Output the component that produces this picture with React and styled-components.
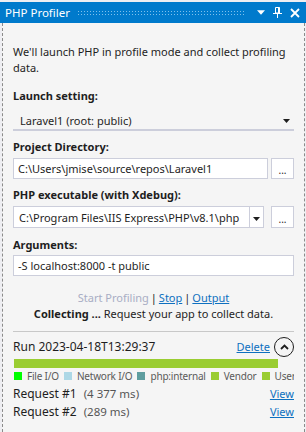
import React from "react";
import styled, { createGlobalStyle } from "styled-components";

const Global = createGlobalStyle`
  html, body { margin: 0; padding: 0; background: #f5f5f5; }
  body { font-family: "Noto Sans", "Open Sans", sans-serif; font-size: 11px; color: #1e1e1e; }
  * { box-sizing: border-box; }
`;

const Window = styled.div`
  width: 306px;
  height: 432px;
  padding-top: 2px;
  background: #eeeef2;
  display: flex;
  flex-direction: column;
  overflow: hidden;
`;

const TitleBar = styled.div`
  height: 21px;
  flex-shrink: 0;
  background: #007acc;
  display: flex;
  align-items: center;
  padding: 0 6px 0 5px;
  gap: 7px;
  color: #fff;
`;

const Title = styled.span`
  font-size: 11.5px;
  white-space: nowrap;
`;

const Grip = styled.div`
  flex: 1;
  height: 5px;
  margin-right: 6px;
  background-image: radial-gradient(circle, rgba(140, 200, 240, 0.9) 0.55px, transparent 0.8px);
  background-size: 3px 3px;
`;

const TitleIcons = styled.div`
  display: flex;
  align-items: center;
  gap: 8px;
`;

const Panel = styled.div`
  flex: 1;
  margin: 0 1px 0 2px;
  background: #f5f5f5;
  border-left: 1px dashed #8a8a8a;
  border-right: 1px dashed #8a8a8a;
  padding: 21px 10px 0 10px;
  display: flex;
  flex-direction: column;
`;

const Intro = styled.p`
  margin: 0 0 12px;
  line-height: 16px;
`;

const Label = styled.div`
  font-weight: 700;
  line-height: 16px;
  margin-bottom: ${(p) => p.$mb ?? 3}px;
`;

const FlatCombo = styled.div`
  display: flex;
  align-items: center;
  justify-content: space-between;
  height: 27px;
  padding: 8px 4px 0 7px;
  border-bottom: 2px solid #cccedb;
  margin-bottom: 8px;
`;

const Row = styled.div`
  display: flex;
  gap: ${(p) => p.$gap || 3}px;
  margin-bottom: ${(p) => p.$mb ?? 8}px;
`;

const TextBox = styled.div`
  flex: 1;
  height: ${(p) => p.$h || 21}px;
  background: #fff;
  border: 1px solid #cccedb;
  display: flex;
  align-items: center;
  padding-left: 4px;
  white-space: nowrap;
  overflow: hidden;
`;

const ComboBox = styled.div`
  flex: 1;
  height: 22px;
  background: #fff;
  border: 1px solid #cccedb;
  display: flex;
  align-items: stretch;
`;

const ComboText = styled.div`
  flex: 1;
  display: flex;
  align-items: center;
  padding-left: 5px;
  white-space: nowrap;
  overflow: hidden;
`;

const ComboArrow = styled.div`
  width: 14px;
  border-left: 1px solid #cccedb;
  display: flex;
  align-items: flex-end;
  justify-content: center;
  padding-bottom: 6px;
`;

const DotsButton = styled.div`
  width: 23px;
  height: ${(p) => p.$h || 21}px;
  background: #fff;
  border: 1px solid #cccedb;
  display: flex;
  align-items: center;
  justify-content: center;
  font-size: 10px;
  line-height: 1;
  padding-top: 3px;
`;

const Actions = styled.div`
  text-align: center;
  line-height: 16px;
  margin-top: 14px;
`;

const Link = styled.span`
  color: ${(p) => (p.$disabled ? "#a8adc4" : "#0e70c0")};
  text-decoration: ${(p) => (p.$disabled ? "none" : "underline")};
`;

const Sep = styled.span`
  color: #1e1e1e;
  margin: 0 2px;
`;

const Status = styled.div`
  text-align: center;
  line-height: 16px;
`;

const Divider = styled.div`
  height: 1px;
  background: #c8c8c8;
  margin-top: 9px;
`;

const RunHeader = styled.div`
  display: flex;
  align-items: center;
  justify-content: space-between;
  margin-top: 4px;
  height: 21px;
`;

const RunTitle = styled.span`
  font-size: 12px;
`;

const RunActions = styled.div`
  display: flex;
  align-items: center;
  gap: 4px;
`;

const CircleBtn = styled.div`
  width: 20px;
  height: 20px;
  border-radius: 50%;
  border: 1.5px solid #1e1e1e;
  display: flex;
  align-items: center;
  justify-content: center;
`;

const Bar = styled.div`
  height: 9px;
  width: 264px;
  margin: 2px 0 0 1px;
  background: #9acd32;
`;

const Legend = styled.div`
  display: flex;
  align-items: center;
  gap: 5px;
  margin-top: 1px;
  overflow: hidden;
  white-space: nowrap;
  height: 14px;
`;

const LegendItem = styled.div`
  display: flex;
  align-items: center;
  gap: 5px;
  font-size: 10px;
  letter-spacing: -0.2px;
  color: #5a5a5a;
  flex-shrink: 0;
`;

const Swatch = styled.span`
  width: 8px;
  height: 8px;
  background: ${(p) => p.$c};
  margin-left: ${(p) => (p.$first ? 1 : 0)}px;
`;

const RequestRow = styled.div`
  display: flex;
  align-items: center;
  height: 18px;
  margin-top: ${(p) => p.$mt || 0}px;
`;

const ReqName = styled.span`
  font-size: 12px;
  margin-right: 7px;
`;

const ReqTime = styled.span`
  color: #555;
  font-size: 11.5px;
  flex: 1;
`;

const DownTri = ({ color = "#1e1e1e", w = 7, h = 4 }) => (
  <svg width={w} height={h} viewBox="0 0 7 4">
    <path d="M0 0H7L3.5 4Z" fill={color} />
  </svg>
);

const legend = [
  { c: "#00ff00", t: "File I/O" },
  { c: "#add8e6", t: "Network I/O" },
  { c: "#5f9ea0", t: "php:internal" },
  { c: "#9acd32", t: "Vendor" },
  { c: "#9acd32", t: "User Code" },
];

export default function App() {
  return (
    <>
      <Global />
      <Window>
        <TitleBar>
          <Title>PHP Profiler</Title>
          <Grip />
          <TitleIcons>
            <DownTri color="#fff" w={8} h={5} />
            <svg width="9" height="11" viewBox="0 0 9 11">
              <path d="M2.5 0.5H6.5V6H2.5Z" fill="none" stroke="#fff" />
              <rect x="5" y="0.5" width="1.5" height="5.5" fill="#fff" />
              <rect x="0" y="6" width="9" height="1" fill="#fff" />
              <rect x="4" y="7" width="1" height="4" fill="#fff" />
            </svg>
            <svg width="10" height="10" viewBox="0 0 10 10">
              <path d="M1 1L9 9M9 1L1 9" stroke="#fff" strokeWidth="1.8" />
            </svg>
          </TitleIcons>
        </TitleBar>
        <Panel>
          <Intro>We'll launch PHP in profile mode and collect profiling data.</Intro>
          <Label $mb={0}>Launch setting:</Label>
          <FlatCombo>
            <span>Laravel1 (root: public)</span>
            <DownTri />
          </FlatCombo>
          <Label>Project Directory:</Label>
          <Row $mb={8}>
            <TextBox>C:\Users\jmise\source\repos\Laravel1</TextBox>
            <DotsButton>...</DotsButton>
          </Row>
          <Label>PHP executable (with Xdebug):</Label>
          <Row $gap={7} $mb={9}>
            <ComboBox>
              <ComboText>C:\Program Files\IIS Express\PHP\v8.1\php</ComboText>
              <ComboArrow>
                <DownTri />
              </ComboArrow>
            </ComboBox>
            <DotsButton $h={22}>...</DotsButton>
          </Row>
          <Label $mb={2}>Arguments:</Label>
          <Row $mb={0}>
            <TextBox $h={21}>-S localhost:8000 -t public</TextBox>
          </Row>
          <Actions>
            <Link $disabled>Start Profiling</Link>
            <Sep>|</Sep>
            <Link>Stop</Link>
            <Sep>|</Sep>
            <Link>Output</Link>
          </Actions>
          <Status>
            <b>Collecting ...</b> Request your app to collect data.
          </Status>
          <Divider />
          <RunHeader>
            <RunTitle>Run 2023-04-18T13:29:37</RunTitle>
            <RunActions>
              <Link>Delete</Link>
              <CircleBtn>
                <svg width="9" height="6" viewBox="0 0 9 6">
                  <path d="M1 5L4.5 1.5L8 5" fill="none" stroke="#1e1e1e" strokeWidth="1.8" />
                </svg>
              </CircleBtn>
            </RunActions>
          </RunHeader>
          <Bar />
          <Legend>
            {legend.map((l, i) => (
              <LegendItem key={l.t}>
                <Swatch $c={l.c} $first={i === 0} />
                {l.t}
              </LegendItem>
            ))}
          </Legend>
          <RequestRow $mt={1}>
            <ReqName>Request #1</ReqName>
            <ReqTime>(4 377 ms)</ReqTime>
            <Link>View</Link>
          </RequestRow>
          <RequestRow>
            <ReqName>Request #2</ReqName>
            <ReqTime>(289 ms)</ReqTime>
            <Link>View</Link>
          </RequestRow>
        </Panel>
      </Window>
    </>
  );
}
